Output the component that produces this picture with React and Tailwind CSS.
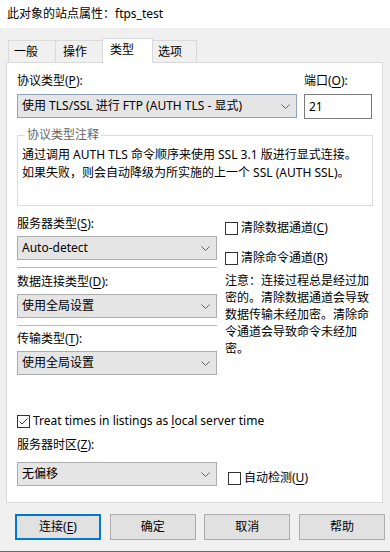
import React from "react";

function U({ children }) {
  return <span className="underline underline-offset-[2px]">{children}</span>;
}

function Chevron() {
  return (
    <svg width="9" height="5" viewBox="0 0 9 5" className="shrink-0">
      <polyline points="0.5,0.5 4.5,4.5 8.5,0.5" fill="none" stroke="#606060" strokeWidth="1" />
    </svg>
  );
}

function Select({ text, className = "", border = "border-[#adadad]" }) {
  return (
    <div className={`h-[24px] flex items-center justify-between bg-[#e5e5e5] border ${border} pl-[4px] pr-[6px] ${className}`}>
      <span className="whitespace-nowrap">{text}</span>
      <Chevron />
    </div>
  );
}

function Box({ checked }) {
  return (
    <span className="w-[13px] h-[13px] border border-[#333333] bg-white flex items-center justify-center shrink-0">
      {checked && (
        <svg width="11" height="11" viewBox="0 0 11 11">
          <path d="M1.5 5.5 L4 8 L9.5 2.5" fill="none" stroke="#333333" strokeWidth="1" />
        </svg>
      )}
    </span>
  );
}

function Btn({ children, primary }) {
  return (
    <div
      className={`w-[86px] h-[26px] flex items-center justify-center bg-[#e1e1e1] ${
        primary ? "border-2 border-[#0078d7]" : "border border-[#adadad]"
      }`}
    >
      {children}
    </div>
  );
}

export default function App() {
  return (
    <div className="w-[390px] h-[552px] bg-[#f0f0f0] flex flex-col text-[12px] leading-[16px] text-black font-['Noto_Sans','Noto_Sans_CJK_SC',sans-serif] border-b border-[#6b6b6b] overflow-hidden">
      {/* title bar */}
      <div className="h-[28px] bg-white flex items-center pl-[7px] text-[12px]">此对象的站点属性：ftps_test</div>

      {/* tabs */}
      <div className="mt-[10px] h-[25px] -mb-[1px] flex items-end pl-[8px]">
        <div className="w-[47px] h-[23px] border-l border-t border-[#d9d9d9] pl-[5px] pt-[3px]">一般</div>
        <div className="w-[47px] h-[23px] border-l border-t border-[#d9d9d9] pl-[7px] pt-[3px]">操作</div>
        <div className="relative z-10 w-[51px] h-[25px] bg-white border-l border-t border-r border-[#d9d9d9] pl-[7px] pt-[3px]">类型</div>
        <div className="w-[44px] h-[23px] border-t border-r border-[#d9d9d9] pl-[5px] pt-[3px]">选项</div>
      </div>

      {/* panel */}
      <div className="ml-[6px] w-[377px] h-[441px] bg-white border border-[#d9d9d9] pl-[10px] pt-[10px] flex flex-col">
        <div className="flex">
          <div className="w-[280px] flex flex-col">
            <div>协议类型(<U>P</U>):</div>
            <Select className="mt-[5px]" border="border-[#8ea3bd]" text="使用 TLS/SSL 进行 FTP (AUTH TLS - 显式)" />
          </div>
          <div className="ml-[7px] w-[68px] flex flex-col">
            <div>端口(<U>O</U>):</div>
            <div className="mt-[5px] h-[25px] border border-[#7a7a7a] bg-white flex items-center pl-[4px]">21</div>
          </div>
        </div>

        {/* group box */}
        <div className="relative mt-[16px] w-[356px] h-[71px] border border-[#dcdcdc] pl-[4px] pt-[10px] leading-[18px]">
          <span className="absolute -top-[9px] left-[7px] bg-white px-[2px] leading-[16px] text-[#666666]">协议类型注释</span>
          <div className="whitespace-nowrap">通过调用 AUTH TLS 命令顺序来使用 SSL 3.1 版进行显式连接。</div>
          <div className="whitespace-nowrap">如果失败，则会自动降级为所实施的上一个 SSL (AUTH SSL)。</div>
        </div>

        {/* middle */}
        <div className="mt-[10px] flex">
          <div className="w-[200px] flex flex-col">
            <div>服务器类型(<U>S</U>):</div>
            <Select className="mt-[4px]" text="Auto-detect" />
            <div className="mt-[7px] h-px bg-[#b9b9b9]" />
            <div className="mt-[6px]">数据连接类型(<U>D</U>):</div>
            <Select className="mt-[4px]" text="使用全局设置" />
            <div className="mt-[7px] h-px bg-[#b9b9b9]" />
            <div className="mt-[5px]">传输类型(<U>T</U>):</div>
            <Select className="mt-[4px]" text="使用全局设置" />
          </div>
          <div className="ml-[8px] w-[148px] flex flex-col">
            <div className="mt-[4px] h-[16px] flex items-center gap-[3px]">
              <Box />
              <span>清除数据通道(<U>C</U>)</span>
            </div>
            <div className="mt-[14px] h-[16px] flex items-center gap-[3px]">
              <Box />
              <span>清除命令通道(<U>R</U>)</span>
            </div>
            <div className="mt-[6px] leading-[17px] w-[146px]">
              注意：连接过程总是经过加密的。清除数据通道会导致数据传输未经加密。清除命令通道会导致命令未经加密。
            </div>
          </div>
        </div>

        {/* bottom */}
        <div className="mt-[38px] h-[16px] flex items-center gap-[3px]">
          <Box checked />
          <span>Treat times in listings as <U>l</U>ocal server time</span>
        </div>
        <div className="mt-[8px]">服务器时区(<U>Z</U>):</div>
        <div className="mt-[9px] flex items-start">
          <Select className="w-[200px]" text="无偏移" />
          <div className="ml-[11px] mt-[8px] h-[16px] flex items-center gap-[3px]">
            <Box />
            <span>自动检测(<U>U</U>)</span>
          </div>
        </div>
      </div>

      {/* buttons */}
      <div className="mt-[11px] flex justify-between pl-[15px] pr-[5px]">
        <Btn primary>
          连接(<U>E</U>)
        </Btn>
        <Btn>确定</Btn>
        <Btn>取消</Btn>
        <Btn>帮助</Btn>
      </div>
    </div>
  );
}
